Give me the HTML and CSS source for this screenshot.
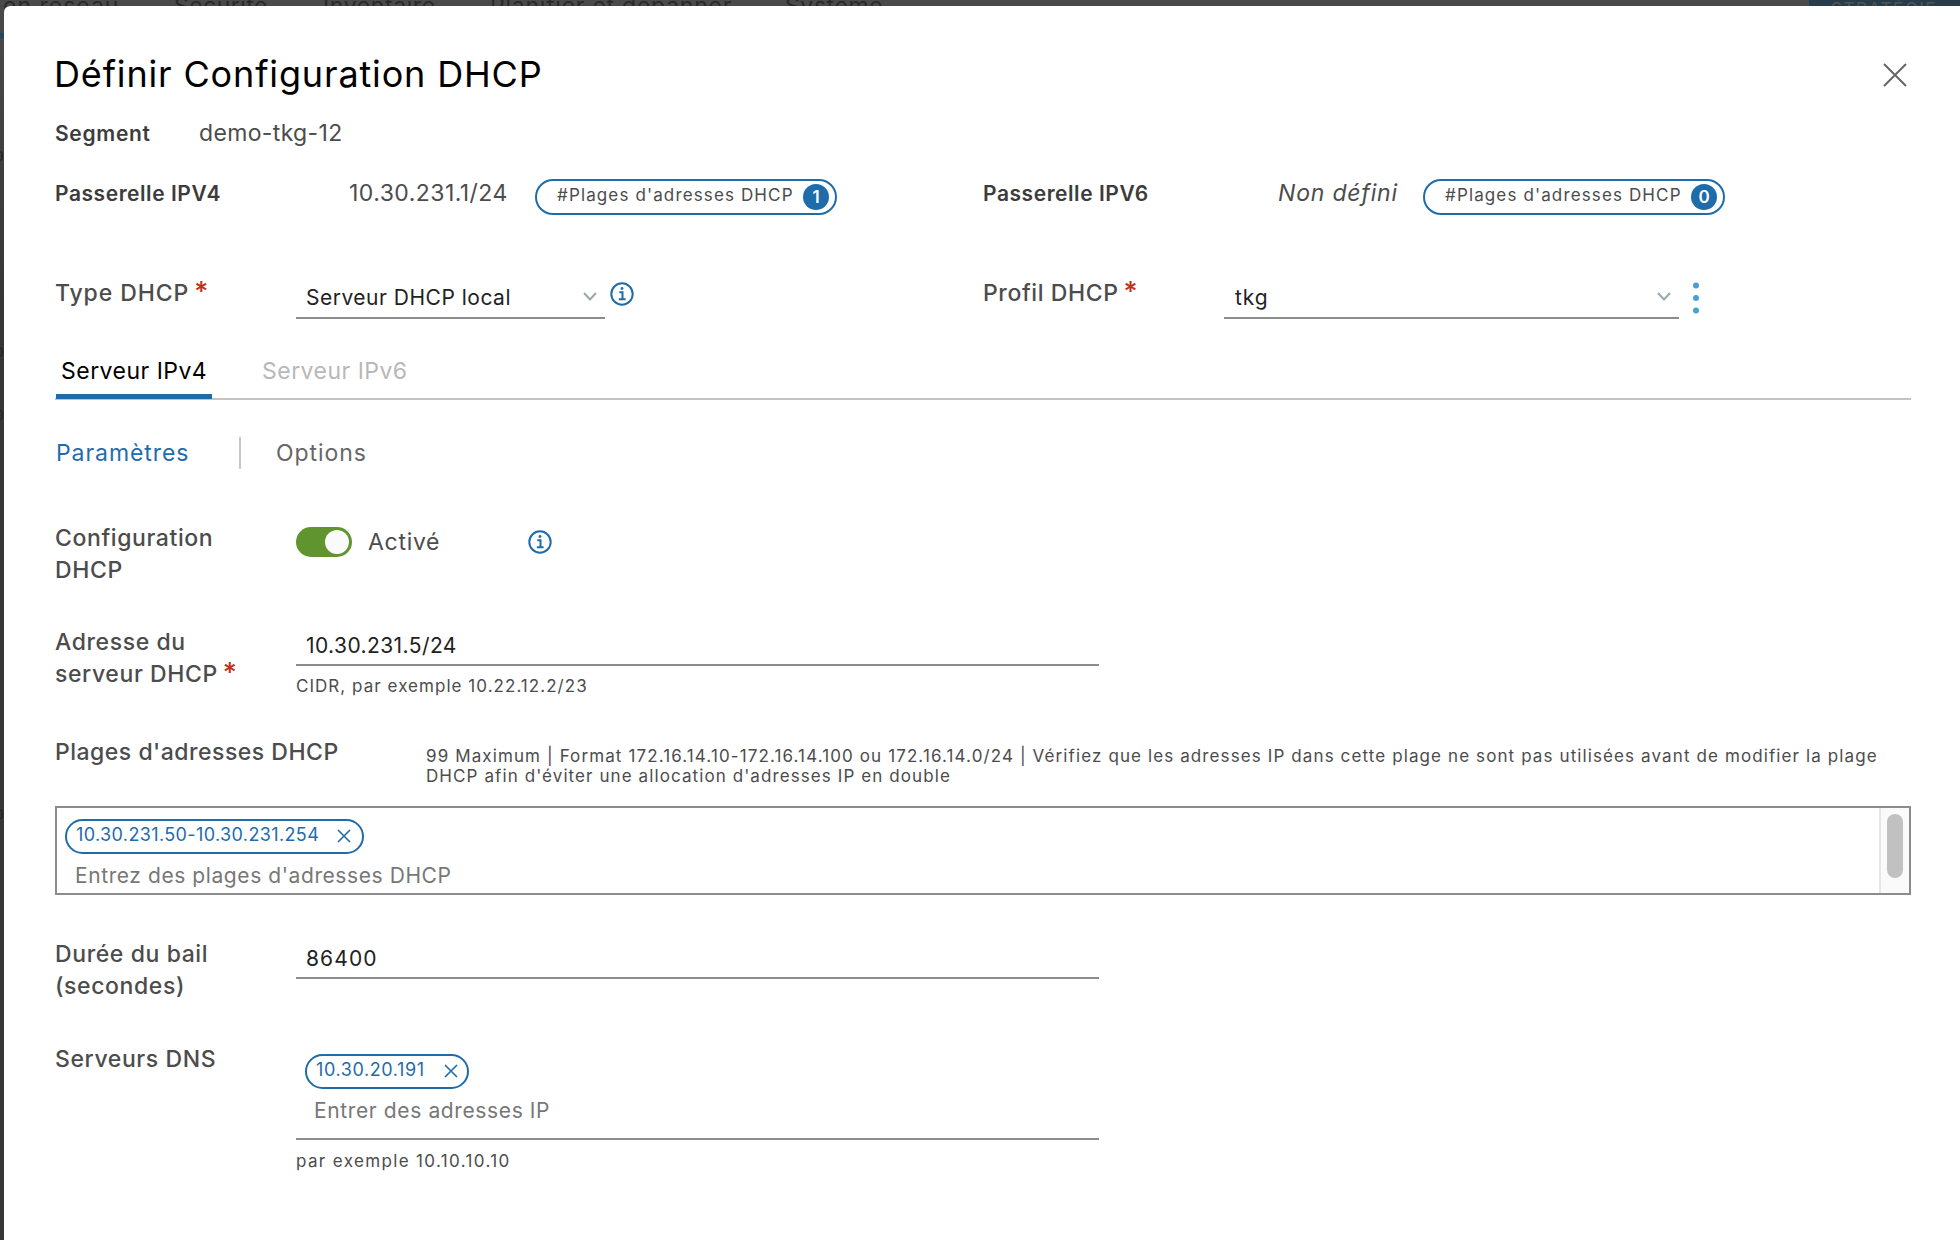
FILE: index.html
```html
<!DOCTYPE html>
<html lang="fr">
<head>
<meta charset="utf-8">
<title>Définir Configuration DHCP</title>
<link rel="stylesheet" href="styles.css">
</head>
<body>
<div class="backdrop">
  <span class="nav n1">en réseau</span><span class="nav n2">Sécurité</span><span class="nav n3">Inventaire</span><span class="nav n4">Planifier et dépanner</span><span class="nav n5">Système</span>
  <span class="policy">STRATÉGIE</span>
  <i class="mark"></i><i class="edge e1"></i><i class="edge e2"></i><i class="edge e3"></i><i class="edge e4"></i>
</div>
<main class="modal">
  <header class="head">
    <h1 class="title">Définir Configuration DHCP</h1>
    <svg class="close" viewBox="0 0 24 24"><path d="M1 1 23 23M23 1 1 23"/></svg>
  </header>
  <div class="segment"><b class="strong s-seg">Segment</b><span class="val s-demo">demo-tkg-12</span></div>
  <div class="gateways">
    <div class="gw">
      <b class="strong gw-label">Passerelle IPV4</b><span class="val gw-v4">10.30.231.1/24</span>
      <span class="pill"><span class="pill-text">#Plages d'adresses DHCP</span><span class="count">1</span></span>
    </div>
    <div class="gw">
      <b class="strong gw-label">Passerelle IPV6</b><span class="val gw-v6">Non défini</span>
      <span class="pill"><span class="pill-text">#Plages d'adresses DHCP</span><span class="count">0</span></span>
    </div>
  </div>
  <div class="selects">
    <div class="pick">
      <label class="lab l-type">Type DHCP<i class="req">*</i></label>
      <div class="select sel-type"><span class="input-text t-type">Serveur DHCP local</span><svg class="chev" viewBox="0 0 14 9"><path d="M1 1 7 7.5 13 1"/></svg></div>
      <svg class="info" viewBox="0 0 24 24"><circle cx="12" cy="12" r="10.7"/><path d="M9.3 10.3h3.2v6.8M8.8 17.3h6.8"/><circle class="dot" cx="12" cy="6.5" r="1.4"/></svg>
    </div>
    <div class="pick">
      <label class="lab l-profil">Profil DHCP<i class="req">*</i></label>
      <div class="select sel-profil"><span class="input-text t-tkg">tkg</span><svg class="chev" viewBox="0 0 14 9"><path d="M1 1 7 7.5 13 1"/></svg></div>
      <svg class="kebab" viewBox="0 0 6 32"><circle cx="3" cy="3.5" r="3"/><circle cx="3" cy="16" r="3"/><circle cx="3" cy="28.5" r="3"/></svg>
    </div>
  </div>
  <div class="tabs"><span class="tab active">Serveur IPv4</span><span class="tab off">Serveur IPv6</span></div>
  <div class="subtabs"><span class="s-par">Paramètres</span><span class="s-opt">Options</span></div>

  <section class="row r-conf">
    <label class="lab"><span class="w-conf">Configuration</span><br><span class="w-dhcp">DHCP</span></label>
    <span class="toggle"><span class="knob"></span></span><span class="val act">Activé</span>
    <svg class="info info2" viewBox="0 0 24 24"><circle cx="12" cy="12" r="10.7"/><path d="M9.3 10.3h3.2v6.8M8.8 17.3h6.8"/><circle class="dot" cx="12" cy="6.5" r="1.4"/></svg>
  </section>
  <section class="row r-addr">
    <label class="lab"><span class="w-addr">Adresse du</span><br><span class="w-serv">serveur DHCP</span><i class="req">*</i></label>
    <div class="field"><div class="box"><span class="input-text t-addr">10.30.231.5/24</span></div><span class="hint h-cidr">CIDR, par exemple 10.22.12.2/23</span></div>
  </section>
  <section class="row r-range">
    <label class="lab lab-wide"><span class="w-plages">Plages d'adresses DHCP</span></label>
    <p class="note"><span class="note1">99 Maximum | Format 172.16.14.10-172.16.14.100 ou 172.16.14.0/24 | Vérifiez que les adresses IP dans cette plage ne sont pas utilisées avant de modifier la plage</span><br><span class="note2">DHCP afin d'éviter une allocation d'adresses IP en double</span></p>
  </section>
  <div class="rangebox">
    <div class="rangebody">
      <span class="chip c-range"><span class="ct-range">10.30.231.50-10.30.231.254</span><svg class="x" viewBox="0 0 14 14"><path d="M1 1 13 13M13 1 1 13"/></svg></span>
      <span class="ph p-range">Entrez des plages d'adresses DHCP</span>
    </div>
    <div class="track"><div class="thumb"></div></div>
  </div>
  <section class="row r-lease">
    <label class="lab"><span class="w-dur">Durée du bail</span><br><span class="w-sec">(secondes)</span></label>
    <div class="field"><div class="box"><span class="input-text t-lease">86400</span></div></div>
  </section>
  <section class="row r-dns">
    <label class="lab"><span class="w-dns">Serveurs DNS</span></label>
    <div class="field"><div class="dnsbox">
      <span class="chip c-dns"><span class="ct-dns">10.30.20.191</span><svg class="x" viewBox="0 0 14 14"><path d="M1 1 13 13M13 1 1 13"/></svg></span>
      <span class="ph p-dns">Entrer des adresses IP</span>
    </div><span class="hint h-dns">par exemple 10.10.10.10</span></div>
  </section>
</main>
</body>
</html>
```
FILE: styles.css
```css
* { box-sizing: border-box; }
html { overflow: hidden; }
body { margin: 0; width: 1960px; height: 1240px; overflow: hidden; background: #3a3a3b; font-family: Inter, "Open Sans", sans-serif; color: #4c4c4d; position: relative; }
b, i, h1, p { margin: 0; font-style: normal; }
span, label, h1, b { white-space: nowrap; }
svg { flex: none; fill: none; }

/* dimmed page behind the dialog */
.backdrop { position: absolute; inset: 0; overflow: hidden; background: linear-gradient(#4a4a4a, #363637 300px); font-size: 23px; line-height: 28px; color: #29292a; }
.nav { position: absolute; top: -8px; }
.n1 { left: 3px; letter-spacing: 1px; } .n2 { left: 174px; letter-spacing: .45px; } .n3 { left: 323px; letter-spacing: .6px; } .n4 { left: 490px; letter-spacing: .75px; } .n5 { left: 785px; letter-spacing: .6px; }
.policy { position: absolute; left: 1809px; top: 0; width: 151px; height: 28px; background: #283d4c; color: #54534f; font-size: 17px; line-height: 18px; padding-left: 22px; letter-spacing: 1.6px; }
.mark { position: absolute; left: 0; top: 33px; width: 4px; height: 5px; background: #24465e; }
.edge { position: absolute; left: 0; width: 3px; height: 10px; border: 2px solid #29292a; border-left: 0; border-radius: 0 5px 5px 0; }
.e1 { top: 151px; } .e2 { top: 347px; } .e3 { top: 410px; } .e4 { top: 809px; }

.modal { position: absolute; left: 4px; top: 6px; width: 1956px; height: 1234px; background: #fff; border-radius: 6px 0 0 0; padding: 0 49px 0 51px; overflow: hidden; }
.head { display: flex; justify-content: space-between; height: 110px; padding-top: 43px; }
.title { font-size: 36px; font-weight: 400; line-height: 50px; color: #000; letter-spacing: .85px; margin-left: -1px; }
.close { width: 24px; height: 24px; margin: 14px 4px 0 0; stroke: #666; stroke-width: 2; }
.strong { font-size: 21px; font-weight: 600; color: #3c3c3d; letter-spacing: .6px; }
.val { font-size: 23px; }
.segment { display: flex; height: 34px; line-height: 35px; }
.s-seg { width: 144px; letter-spacing: .7px; }
.s-demo { letter-spacing: .35px; }
.gateways { display: grid; grid-template-columns: 928px 1fr; height: 80px; padding-top: 24px; }
.gw { display: flex; line-height: 39px; }
.gw-label { width: 294px; letter-spacing: .55px; }
.gw-v4 { width: 186px; letter-spacing: .45px; }
.gw-v6 { width: 146px; padding-left: 1px; font-style: italic; letter-spacing: .8px; }
.pill { width: 302px; height: 36px; margin-top: 5px; border: 2px solid #1f6cab; border-radius: 18px; display: flex; align-items: center; padding-left: 20px; }
.pill-text { font-size: 17px; width: 246px; line-height: 28px; margin-top: -5px; letter-spacing: 1.13px; }
.count { width: 26px; height: 26px; border-radius: 50%; background: #1f6cab; color: #fff; font-size: 17px; font-weight: 600; line-height: 26px; text-align: center; }

.lab { flex: none; width: 241px; font-size: 23px; font-weight: 500; line-height: 32px; letter-spacing: .6px; }
.lab-wide { width: 371px; letter-spacing: .5px; }
.req { color: #c22f17; font-size: 27px; line-height: 0; margin-left: 5px; }
.selects { display: grid; grid-template-columns: 928px 1fr; height: 113px; padding-top: 47px; }
.pick { display: flex; }
.l-type { letter-spacing: .9px; }
.l-profil { letter-spacing: .6px; }
.select { display: flex; justify-content: space-between; height: 42px; border-bottom: 2px solid #8c8c8c; padding: 5px 8px 0 10px; }
.sel-type { width: 309px; }
.sel-profil { width: 455px; }
.input-text { font-size: 21px; line-height: 32px; color: #222; letter-spacing: .5px; }
.t-tkg { padding-left: 1px; letter-spacing: .9px; }
.t-addr { letter-spacing: .42px; }
.t-lease { letter-spacing: 1.1px; }
.chev { width: 14px; height: 9px; margin-top: 10px; stroke: #9aa8b0; stroke-width: 2; }
.info { width: 24px; height: 24px; margin: 5px 0 0 5px; stroke: #1f6cab; stroke-width: 2; }
.info .dot { fill: #1f6cab; stroke: none; }
.kebab { width: 6px; height: 32px; margin: 5px 0 0 14px; fill: #49a0d5; }

.tabs { display: flex; height: 51px; margin-top: 6px; border-bottom: 2px solid #c3c3c3; font-size: 23px; line-height: 44px; letter-spacing: .48px; }
.tab { height: 50px; }
.active { width: 156px; margin-left: 1px; padding-left: 5px; border-bottom: 5px solid #1f6cab; color: #000; }
.off { margin-left: 50px; color: #b8b8b8; }
.subtabs { display: flex; margin-top: 37px; height: 32px; font-size: 23px; line-height: 32px; letter-spacing: .93px; }
.s-par { width: 184px; padding-left: 1px; color: #1f6cab; }
.s-opt { padding-left: 35px; border-left: 2px solid #c6c6c6; color: #666; }

.row { display: flex; }
.r-conf { margin-top: 53px; height: 104px; }
.toggle { width: 56px; height: 30px; margin-top: 5px; border-radius: 15px; background: #60942f; padding: 3px 0 0 29px; flex: none; }
.knob { display: block; width: 24px; height: 24px; border-radius: 50%; background: #fafafa; }
.act { width: 176px; padding-left: 16px; line-height: 40px; letter-spacing: .7px; }
.info2 { margin: 8px 0 0; }
.field { width: 803px; }
.box { height: 40px; border-bottom: 2px solid #8c8c8c; padding: 4px 0 0 10px; }
.box .input-text { display: block; }
.hint { display: block; font-size: 17px; line-height: 40px; }
.h-cidr { letter-spacing: 1.04px; }
.h-dns { letter-spacing: 1.36px; line-height: 42px; }
.r-addr { height: 110px; }
.r-range { height: 70px; }
.note { font-size: 17px; line-height: 20px; padding-top: 10px; letter-spacing: 1.11px; }
.note2 { letter-spacing: 1.09px; }
.rangebox { display: flex; height: 89px; border: 2px solid #8c8c8c; }
.rangebody { flex: 1; padding: 11px 0 0 8px; }
.chip { display: flex; height: 35px; border: 2px solid #1f6cab; border-radius: 18px; color: #1f6cab; font-size: 18px; line-height: 28px; padding: 0 11px 0 9px; justify-content: space-between; }
.c-range { width: 299px; letter-spacing: .38px; }
.c-dns { width: 164px; padding-right: 9px; letter-spacing: .6px; }
.x { width: 14px; height: 14px; margin-top: 8px; stroke: #1f6cab; stroke-width: 1.6; }
.ph { display: block; font-size: 21px; line-height: 30px; margin: 7px 0 0 9px; color: #777; letter-spacing: .62px; }
.p-range { margin-left: 10px; letter-spacing: .58px; }
.track { width: 30px; background: #fafafa; border-left: 2px solid #e6e6e6; padding: 6px 0 0 6px; }
.thumb { width: 16px; height: 64px; border-radius: 8px; background: #c1c1c1; }
.r-lease { margin-top: 43px; height: 105px; }
.r-lease .box { height: 41px; padding-top: 5px; }
.dnsbox { height: 97px; border-bottom: 2px solid #8c8c8c; padding: 11px 0 0 9px; }
```
